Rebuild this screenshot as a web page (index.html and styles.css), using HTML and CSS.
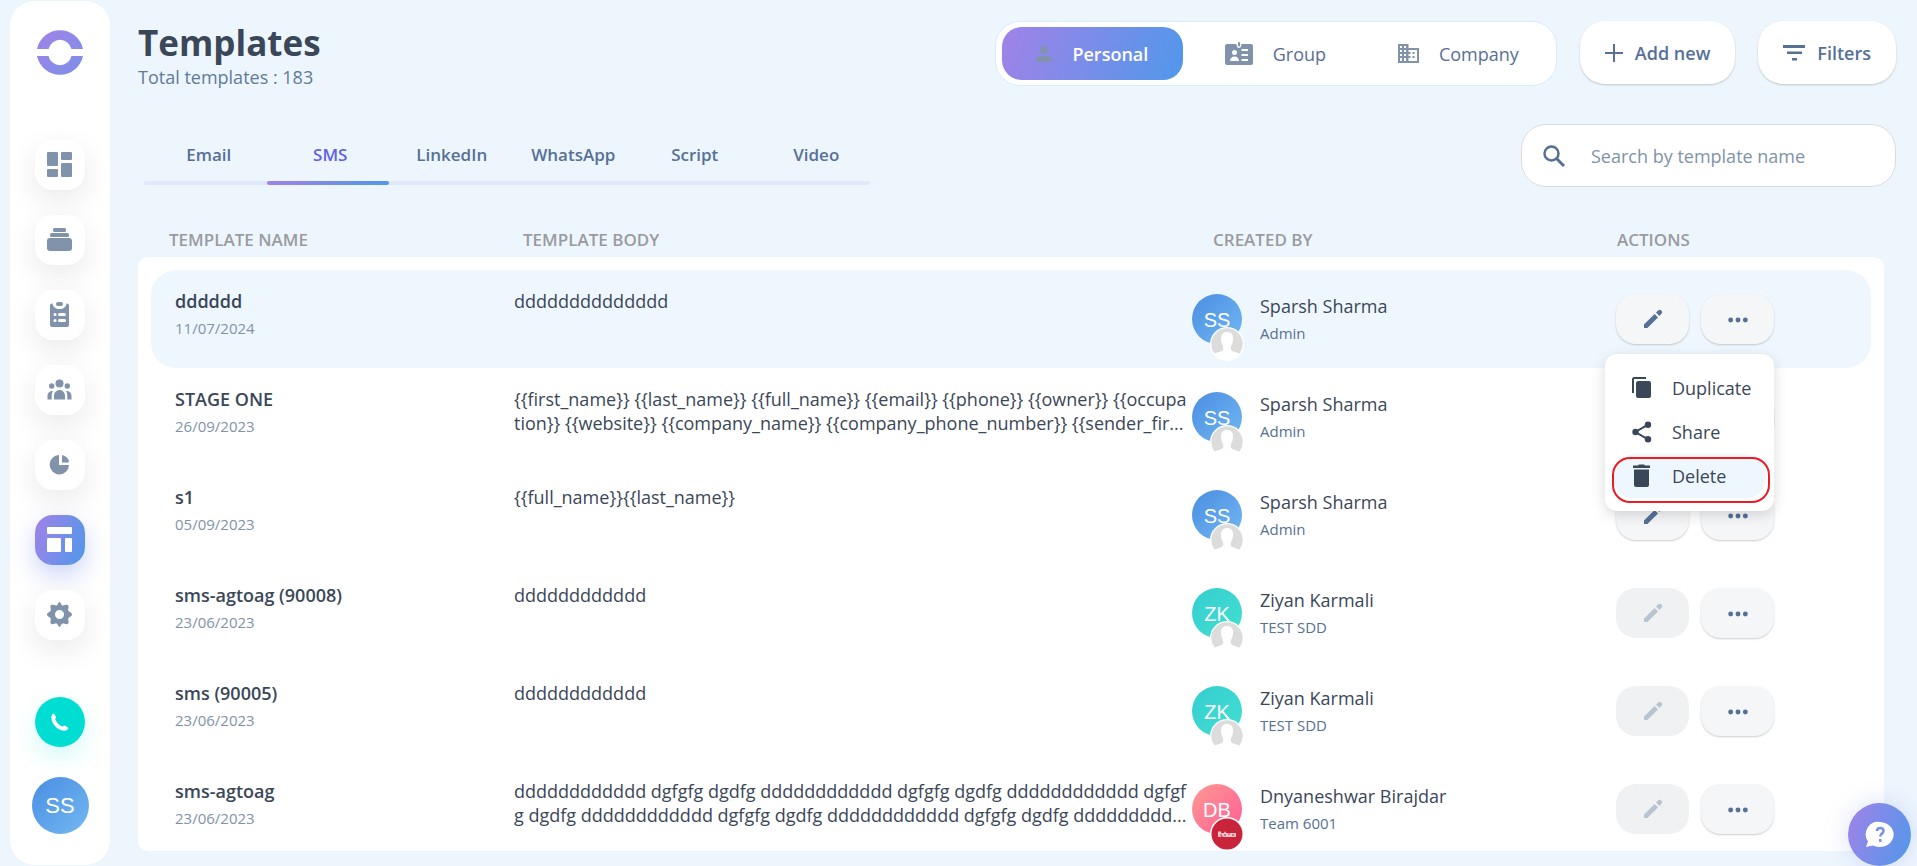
FILE: index.html
```html
<!DOCTYPE html>
<html lang="en">
<head>
<meta charset="utf-8">
<title>Templates</title>
<link rel="stylesheet" href="styles.css">
</head>
<body>
<svg class="defs" aria-hidden="true">
  <defs>
    <linearGradient id="brand" x1="0" y1="0" x2="1" y2="1"><stop offset="0" stop-color="#a182e8"/><stop offset="1" stop-color="#7c90e9"/></linearGradient>
    <symbol id="pencil" viewBox="0 0 24 24"><path d="M3 17.600V21h3.400L17 10.400 13.600 7zM20.700 6.600a1.800 1.800 0 0 0 0-2.500l-.8-.8a1.800 1.800 0 0 0-2.500 0L15 5.600 18.400 9z"/></symbol>
    <symbol id="dots" viewBox="0 0 24 24"><circle cx="4" cy="13" r="2.700"/><circle cx="12" cy="13" r="2.700"/><circle cx="20" cy="13" r="2.700"/></symbol>
    <symbol id="person" viewBox="0 0 34 34"><circle cx="17" cy="17" r="17" fill="#fff"/><path fill="#dcdcdc" d="M4.500 26.500a15.700 15.700 0 1 1 25 0c-3-.8-6.200-1.700-8.500-3.500-.5-1.500-.2-3 .2-4.500 1.300-2 1.800-4 1.800-7 0-4-2-6.500-6-6.500s-6 2.500-6 6.500c0 3 .5 5 1.800 7 .4 1.500.7 3 .2 4.500-2.300 1.800-5.500 2.700-8.500 3.500z"/></symbol>
  </defs>
</svg>
<div class="app">
  <aside class="sidebar">
    <a class="logo" href="#" aria-label="Home"><svg width="48" height="48" viewBox="0 0 48 48"><path fill="url(#brand)" d="M1 21a23.500 23.500 0 0 1 46 0H35.500a11.800 11.800 0 0 0-23 0zM1 28h11.500a11.800 11.800 0 0 0 23 0H47a23.500 23.500 0 0 1-46 0z"/></svg></a>
    <nav class="nav">
      <a href="#" class="nav-item" aria-label="Dashboard"><svg width="25" height="25" viewBox="0 0 25 25"><rect width="11" height="14" rx="1"/><rect x="14" width="11" height="8" rx="1"/><rect y="17" width="11" height="8" rx="1"/><rect x="14" y="11" width="11" height="14" rx="1"/></svg></a>
      <a href="#" class="nav-item" aria-label="Library"><svg width="25" height="25" viewBox="0 0 25 25"><rect x="6" y="1" width="13" height="4" rx="1.500"/><rect x="3" y="6" width="19" height="4" rx="1.500"/><rect y="11" width="25" height="13" rx="3"/></svg></a>
      <a href="#" class="nav-item" aria-label="Tasks"><svg width="25" height="25" viewBox="0 0 25 25"><path d="M5 1.500h.5C6 5 8.500 7 12.500 7s6.500-2 7-5.500h.5a2 2 0 0 1 2 2V23a2 2 0 0 1-2 2H5a2 2 0 0 1-2-2V3.500a2 2 0 0 1 2-2z"/><rect x="9" y="0" width="7" height="4" rx="2"/><g fill="#fff"><circle cx="8" cy="12.500" r="1.500"/><rect x="11" y="11" width="8" height="3" rx="1.500"/><circle cx="8" cy="18.500" r="1.500"/><rect x="11" y="17" width="8" height="3" rx="1.500"/></g></svg></a>
      <a href="#" class="nav-item" aria-label="Contacts"><svg width="25" height="25" viewBox="0 0 25 25"><circle cx="12.500" cy="6.500" r="4"/><circle cx="4.700" cy="9" r="2.700"/><circle cx="20.300" cy="9" r="2.700"/><path d="M7 22.500V19c0-3.500 2.500-6 5.500-6s5.500 2.500 5.500 6v3.500zM.5 22.500V19c0-3 2-5 5.500-5-1 1.500-1.300 3-1.300 5v3.500zM24.500 22.500V19c0-3-2-5-5.500-5 1 1.500 1.300 3 1.300 5v3.500z"/></svg></a>
      <a href="#" class="nav-item" aria-label="Reports"><svg width="25" height="25" viewBox="0 0 25 25"><path d="M12 3v10h10A9.700 9.700 0 1 1 12 3z"/><path d="M15 3a8.500 8.500 0 0 1 7 7.500h-7z"/></svg></a>
      <a href="#" class="nav-item nav-item-active" aria-label="Templates"><svg width="25" height="25" viewBox="0 0 25 25"><rect width="25" height="7" rx="1"/><rect y="11" width="14" height="14" rx="1"/><rect x="18" y="11" width="7" height="14" rx="1"/></svg></a>
      <a href="#" class="nav-item" aria-label="Settings"><svg width="25" height="25" viewBox="0 0 25 25"><path fill-rule="evenodd" d="M12.500 0c1.200 0 1.500 3 3 3.400s3.700-1.500 5.500-.1c1.500 1.600-.3 3.800.3 5.200s3.700 2.200 3.700 4-3.200 2.500-3.700 4 1.200 3.600-.3 5.200c-1.800 1.400-4-.5-5.500-.1s-1.800 3.400-3 3.400-1.500-3-3-3.400-3.700 1.500-5.500.1c-1.500-1.600.3-3.800-.3-5.200S0 14.300 0 12.500s3.200-2.500 3.700-4-1.200-3.600.3-5.200c1.800-1.400 4 .5 5.500.1S11.300 0 12.500 0zm0 8a4.500 4.500 0 1 0 0 9 4.500 4.500 0 0 0 0-9z"/></svg></a>
    </nav>
    <div class="sidebar-foot">
      <button class="call" aria-label="Call"><svg width="18" height="18" viewBox="0 0 18 18"><path d="M2.800.6 5 3.800 4.300 6c1 3.500 3.500 6.300 7 7.500l2.500-1 3.700 2.600c-.8 2-2.600 2.900-4.700 2.700C6.300 17 .5 11 .4 4.500.4 2.800 1.200 1.200 2.800.6z"/></svg></button>
      <button class="me">SS</button>
    </div>
  </aside>

  <main class="main">
    <header class="top">
      <div class="heading">
        <h1>Templates</h1>
        <p>Total templates : 183</p>
      </div>
      <div class="top-actions">
        <div class="scope">
          <button class="scope-item scope-item-active"><svg width="16" height="16" viewBox="0 0 16 16"><circle cx="8" cy="4" r="3.800"/><path d="M0 13.500C0 11 4 10 8 10s8 1 8 3.500c0 1.500-.8 2.200-2 2.200H2c-1.200 0-2-.7-2-2.200z"/></svg>Personal</button>
          <button class="scope-item"><svg width="28" height="23" viewBox="0 0 28 23"><path fill-rule="evenodd" d="M2 2h9.500c0 2.500 1 4 2.500 4s2.500-1.500 2.500-4H26a2 2 0 0 1 2 2v17a2 2 0 0 1-2 2H2a2 2 0 0 1-2-2V4c0-1 1-2 2-2zm7.500 6a2.500 2.500 0 1 0 0 5 2.500 2.500 0 0 0 0-5zM5 19h9c0-3-2-4.500-4.500-4.500S5 16 5 19zM16.500 7v2h6.500V7zm0 5v2h6.500v-2zm0 5v2h6.500v-2z"/><rect x="13" width="2" height="4.500" rx="1"/></svg>Group</button>
          <button class="scope-item"><svg width="21" height="19" viewBox="0 0 21 19"><path fill-rule="evenodd" d="M0 0h10.500v4H21v15H0zM2 2v2h2V2zm4 0v2h2V2zM2 6v2h2V6zm4 0v2h2V6zm-4 4v2h2v-2zm4 0v2h2v-2zm-4 4v3h2v-3zm4 0v3h2v-3zm4.500-8v2h2v2h-2v2h2v2h-2v3H19V6zM14.500 8h2v2h-2zm0 4h2v2h-2z"/></svg>Company</button>
        </div>
        <button class="pill"><svg width="18" height="18" viewBox="0 0 18 18"><path d="M8 0h2v8h8v2h-8v8H8v-8H0V8h8z"/></svg>Add new</button>
        <button class="pill"><svg width="22" height="16" viewBox="0 0 22 16"><path d="M0 0h22v3H0zM4 6.500h15v2.500H4zM9 13h5v2.500H9z"/></svg>Filters</button>
      </div>
    </header>

    <div class="toolbar">
      <div class="tabs">
        <div class="tab-list" role="tablist">
          <button class="tab" role="tab">Email</button>
          <button class="tab tab-active" role="tab" aria-selected="true">SMS</button>
          <button class="tab" role="tab">LinkedIn</button>
          <button class="tab" role="tab">WhatsApp</button>
          <button class="tab" role="tab">Script</button>
          <button class="tab" role="tab">Video</button>
        </div>
        <div class="tab-track"><div class="tab-marker"></div></div>
      </div>
      <label class="search">
        <svg width="22" height="22" viewBox="0 0 22 22"><circle cx="8.500" cy="8.500" r="7" fill="none" stroke="#567096" stroke-width="2.500"/><path d="m13.500 13.500 7.500 7.500" fill="none" stroke="#567096" stroke-width="3"/></svg>
        <input type="text" placeholder="Search by template name" aria-label="Search by template name">
      </label>
    </div>

    <table class="templates">
      <thead>
        <tr><th>TEMPLATE NAME</th><th>TEMPLATE BODY</th><th>CREATED BY</th><th>ACTIONS</th></tr>
      </thead>
      <tbody>
        <tr class="current">
          <td><div class="name">dddddd</div><div class="date">11/07/2024</div></td>
          <td><div class="body-text">dddddddddddddd</div></td>
          <td><div class="owner"><span class="avatar blue">SS<svg class="badge"><use href="#person"/></svg></span><div><div class="owner-name">Sparsh Sharma</div><div class="role">Admin</div></div></div></td>
          <td><div class="actions"><button class="act" aria-label="Edit"><svg width="24" height="24"><use href="#pencil"/></svg></button><button class="act" aria-label="More"><svg width="22" height="22"><use href="#dots"/></svg></button>
            <div class="menu" role="menu">
              <button role="menuitem"><svg width="20" height="24" viewBox="0 0 20 24"><path d="M0 17V3c0-1 1-2 2-2h12v2H2v14zM6 5h11a2 2 0 0 1 2 2v13a2 2 0 0 1-2 2H6a2 2 0 0 1-2-2V7c0-1 1-2 2-2z"/></svg>Duplicate</button>
              <button role="menuitem"><svg width="20" height="24" viewBox="0 0 20 24"><circle cx="3.500" cy="12" r="3.200"/><circle cx="16" cy="4.700" r="3.200"/><circle cx="16" cy="19.300" r="3.200"/><path fill="none" stroke="#3a4759" stroke-width="2" d="M16 4.700 3.500 12 16 19.300"/></svg>Share</button>
              <button role="menuitem" class="menu-hover"><svg width="20" height="24" viewBox="0 0 20 24"><path d="M1 1.500h5L7 .5h5l1 1h5V4H1zM2 5.500h15V21a2 2 0 0 1-2 2H4a2 2 0 0 1-2-2z"/></svg>Delete</button>
              <span class="marker"></span>
            </div></div></td>
        </tr>
        <tr>
          <td><div class="name">STAGE ONE</div><div class="date">26/09/2023</div></td>
          <td><div class="body-text">{{first_name}} {{last_name}} {{full_name}} {{email}} {{phone}} {{owner}} {{occupation}} {{website}} {{company_name}} {{company_phone_number}} {{sender_fir...</div></td>
          <td><div class="owner"><span class="avatar blue">SS<svg class="badge"><use href="#person"/></svg></span><div><div class="owner-name">Sparsh Sharma</div><div class="role">Admin</div></div></div></td>
          <td><div class="actions"><button class="act" aria-label="Edit"><svg width="24" height="24"><use href="#pencil"/></svg></button><button class="act" aria-label="More"><svg width="22" height="22"><use href="#dots"/></svg></button></div></td>
        </tr>
        <tr>
          <td><div class="name">s1</div><div class="date">05/09/2023</div></td>
          <td><div class="body-text">{{full_name}}{{last_name}}</div></td>
          <td><div class="owner"><span class="avatar blue">SS<svg class="badge"><use href="#person"/></svg></span><div><div class="owner-name">Sparsh Sharma</div><div class="role">Admin</div></div></div></td>
          <td><div class="actions"><button class="act" aria-label="Edit"><svg width="24" height="24"><use href="#pencil"/></svg></button><button class="act" aria-label="More"><svg width="22" height="22"><use href="#dots"/></svg></button></div></td>
        </tr>
        <tr>
          <td><div class="name">sms-agtoag (90008)</div><div class="date">23/06/2023</div></td>
          <td><div class="body-text">dddddddddddd</div></td>
          <td><div class="owner"><span class="avatar teal">ZK<svg class="badge"><use href="#person"/></svg></span><div><div class="owner-name">Ziyan Karmali</div><div class="role">TEST SDD</div></div></div></td>
          <td><div class="actions"><button class="act" aria-label="Edit" disabled><svg width="24" height="24"><use href="#pencil"/></svg></button><button class="act" aria-label="More"><svg width="22" height="22"><use href="#dots"/></svg></button></div></td>
        </tr>
        <tr>
          <td><div class="name">sms (90005)</div><div class="date">23/06/2023</div></td>
          <td><div class="body-text">dddddddddddd</div></td>
          <td><div class="owner"><span class="avatar teal">ZK<svg class="badge"><use href="#person"/></svg></span><div><div class="owner-name">Ziyan Karmali</div><div class="role">TEST SDD</div></div></div></td>
          <td><div class="actions"><button class="act" aria-label="Edit" disabled><svg width="24" height="24"><use href="#pencil"/></svg></button><button class="act" aria-label="More"><svg width="22" height="22"><use href="#dots"/></svg></button></div></td>
        </tr>
        <tr>
          <td><div class="name">sms-agtoag</div><div class="date">23/06/2023</div></td>
          <td><div class="body-text">dddddddddddd dgfgfg dgdfg dddddddddddd dgfgfg dgdfg dddddddddddd dgfgfg dgdfg dddddddddddd dgfgfg dgdfg dddddddddddd dgfgfg dgdfg ddddddddd...</div></td>
          <td><div class="owner"><span class="avatar pink">DB<svg class="badge" viewBox="0 0 34 34"><circle cx="17" cy="17" r="17" fill="#fff"/><circle cx="17" cy="17" r="15.500" fill="#c92439"/><path d="M8 14.500h3v1.500h3l1-2 1 2h10v4H13l-1-1.500-1 1.500H8z" fill="#f3c3ca"/><path d="M10 18h2m2 0h2m2-1h2m2 1h2" stroke="#c92439" fill="none"/></svg></span><div><div class="owner-name">Dnyaneshwar Birajdar</div><div class="role">Team 6001</div></div></div></td>
          <td><div class="actions"><button class="act" aria-label="Edit" disabled><svg width="24" height="24"><use href="#pencil"/></svg></button><button class="act" aria-label="More"><svg width="22" height="22"><use href="#dots"/></svg></button></div></td>
        </tr>
      </tbody>
    </table>
  </main>
</div>
<button class="help" aria-label="Help"><svg width="30" height="28" viewBox="0 0 30 28"><path fill="#fff" d="M15 1a14 12.500 0 1 1-7 23.500L1 26l2-5.500A12.500 12.500 0 0 1 15 1z"/><path fill="none" stroke="#7c8fe8" stroke-width="2.500" d="M12 10c0-4 6.500-4 6.500-.3 0 2.800-3.200 2.800-3.200 5.800M15.300 18v3"/></svg></button>
</body>
</html>
```
FILE: styles.css
```css
* { box-sizing: border-box; }
body { margin: 0; background: #eef6fd; color: #3a4759; font: 18px/24px "Open Sans", "Noto Sans", sans-serif; overflow: hidden; }
button { font: inherit; color: inherit; border: 0; padding: 0; background: none; }
h1, p { margin: 0; }
svg { flex: none; fill: currentColor; }
.defs { position: absolute; width: 0; height: 0; }

.app { display: flex; height: 100vh; padding-left: 10px; }
.sidebar { flex: none; width: 100px; margin: 1px 0; background: #fff; border-radius: 25px; display: flex; flex-direction: column; align-items: center; }
.logo { margin-top: 27px; height: 48px; }
.nav { display: grid; gap: 25px; margin-top: 64px; }
.nav-item { width: 50px; height: 50px; padding: 12px; border-radius: 18px; background: #fff; color: #8093aa; display: grid; box-shadow: 0 10px 30px rgba(0, 0, 0, 0.09); }
.nav-item-active { background: linear-gradient(110deg, #a182e8, #5098ea); color: #fff; box-shadow: 0 10px 25px rgba(110, 130, 232, 0.35); }
.sidebar-foot { margin-top: auto; padding-bottom: 31px; display: grid; justify-items: center; gap: 30px; }
.call { width: 50px; height: 50px; border-radius: 50%; background: #00ded3; color: #fff; display: grid; place-items: center; box-shadow: 0 10px 25px rgba(0, 222, 211, 0.18); }
.me { width: 57px; height: 57px; border-radius: 50%; background: linear-gradient(135deg, #4a8de2, #72b9f2); color: #fff; font: 22px/24px "Liberation Sans", sans-serif; }

.main { flex: 1; min-width: 0; display: flex; flex-direction: column; padding: 21px 21px 15px 28px; }
.top { display: flex; justify-content: space-between; align-items: flex-start; height: 103px; }
h1 { font-size: 35px; line-height: 44px; font-weight: 700; }
.heading p { color: #5f7a9c; }
.top-actions { display: flex; gap: 23px; color: #567096; }
.scope { display: flex; gap: 2px; background: #fff; border: 1px solid #d9ebff; border-radius: 25px; padding: 5px 7px 5px 6px; height: 65px; }
.scope-item { display: flex; align-items: center; justify-content: center; gap: 20px; width: 181px; border-radius: 20px; }
.scope-item svg { color: #8093aa; }
.scope-item-active { color: #fff; font-weight: 600; background: linear-gradient(110deg, #a182e8, #5098ea); }
.pill { display: flex; align-items: center; gap: 12px; height: 63px; padding: 0 25px; border-radius: 25px; background: #fff; font-weight: 600; box-shadow: 0 1px 2px rgba(0, 0, 0, 0.2); }

.toolbar { display: flex; justify-content: space-between; height: 63px; }
.tabs { margin-left: 6px; padding-top: 19px; }
.tab-list { display: grid; grid-template-columns: repeat(6, 1fr); width: 733px; padding-left: 4px; }
.tab { color: #567096; font-size: 17px; font-weight: 600; }
.tab-active { color: #5f62e2; }
.tab-track { width: 726px; height: 4px; margin-top: 14px; border-radius: 2px; background: #e0e9fb; }
.tab-marker { width: 122px; height: 4px; margin-left: 123px; border-radius: 2px; background: linear-gradient(90deg, #a182e8, #5098ea); }
.search { display: flex; align-items: center; gap: 26px; width: 375px; padding: 0 21px; border: 1px solid #d8dce0; border-radius: 25px; background: #fff; }
.search input { flex: 1; min-width: 0; border: 0; padding: 0; outline: 0; background: none; font: inherit; color: #3a4759; }
.search input::placeholder { color: #8093aa; opacity: 1; }

.templates { flex: 1; min-height: 0; display: flex; flex-direction: column; margin: 41px 12px 0 0; }
thead, td { display: block; }
th { padding: 0; text-align: left; font-size: 17px; line-height: 24px; font-weight: 600; color: #9a9ba0; }
thead tr { display: grid; grid-template-columns: 354fr 690fr 404fr 267fr; padding-left: 31px; height: 29px; }
td { padding: 0; min-width: 0; }
tbody { display: block; flex: 1; min-height: 0; overflow: hidden; padding: 13px 13px 0; background: #fff; border-radius: 10px; }
tbody tr { display: grid; grid-template-columns: 339fr 678fr 424fr 255fr; height: 98px; padding: 19px 0 0 24px; border-radius: 25px; }
.current { background: #eff7fe; }
.name { font-weight: 600; }
.date { margin-top: 5px; font-size: 15px; line-height: 20px; color: #8093aa; }
.body-text { word-break: break-all; margin-right: 2px; }
.owner { display: flex; gap: 18px; padding-top: 5px; }
.avatar { position: relative; flex: none; width: 50px; height: 50px; border-radius: 50%; color: #fff; font: 20px/52px "Liberation Sans", sans-serif; text-align: center; }
.blue { background: linear-gradient(135deg, #4a8de2, #72b9f2); }
.teal { background: linear-gradient(135deg, #35cdd0, #42e0d2); }
.pink { background: linear-gradient(135deg, #ff9a94, #ff5c93); }
.badge { position: absolute; left: 18px; top: 33px; width: 34px; height: 34px; }
.role { margin-top: 5px; font-size: 15px; line-height: 20px; color: #567096; }
.actions { position: relative; display: flex; gap: 12px; padding-top: 5px; }
.act { width: 73px; height: 50px; border-radius: 20px; background: #f5f6f8; color: #567096; display: grid; place-items: center; box-shadow: 0 1px 2px rgba(0, 0, 0, 0.2); }
.act:disabled { background: #f0f1f3; color: #b9c4d1; box-shadow: none; }
.menu { position: absolute; z-index: 1; left: -11px; top: 65px; width: 169px; padding: 12px 8px 13px; background: #fff; border-radius: 12px; box-shadow: 0 4px 14px rgba(0, 0, 0, 0.15); display: grid; }
.menu button { display: flex; align-items: center; gap: 20px; height: 44px; padding-left: 19px; border-radius: 20px; text-align: left; }
.menu .menu-hover { background: #eff7fe; }
.marker { position: absolute; left: 7px; bottom: 8px; width: 158px; height: 46px; border: 2px solid #ec1c24; border-radius: 18px; }
.help { position: fixed; right: 6px; bottom: 0; width: 63px; height: 63px; border-radius: 50%; display: grid; place-items: center; background: linear-gradient(110deg, #a182e8, #5098ea); box-shadow: 0 0 25px rgba(110, 130, 232, 0.25); }
```
